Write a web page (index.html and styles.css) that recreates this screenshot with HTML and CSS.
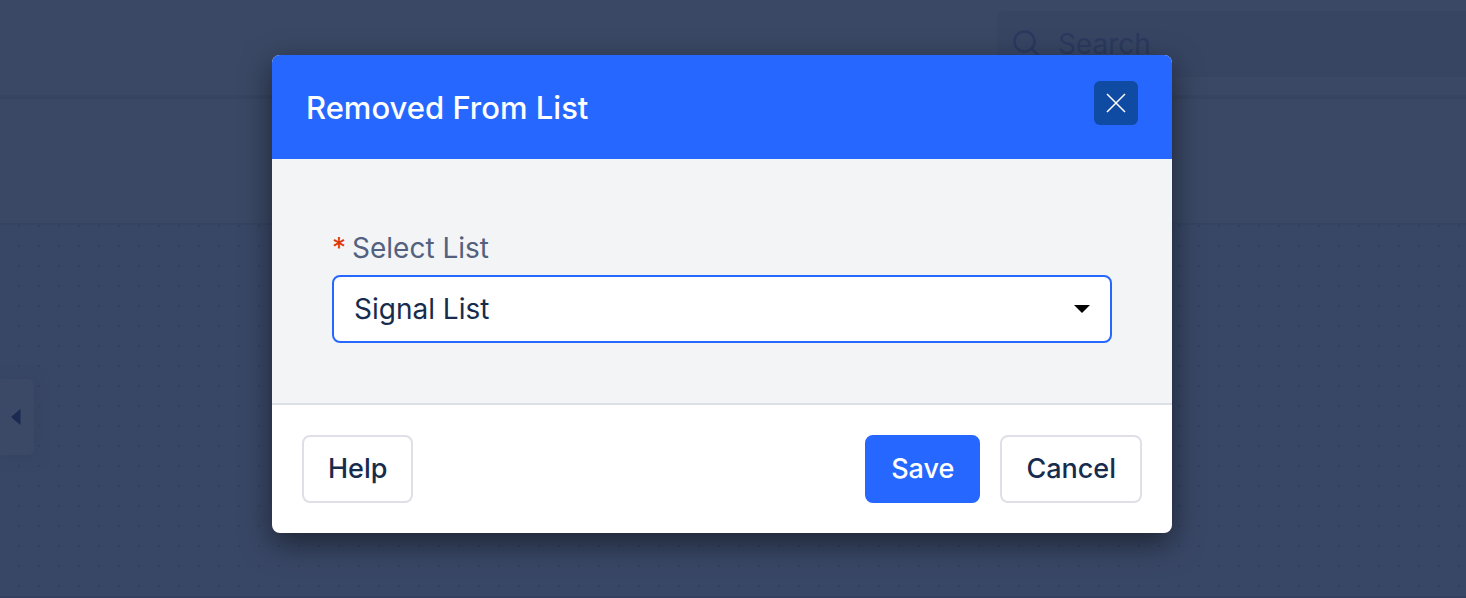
FILE: index.html
```html
<!DOCTYPE html>
<html lang="en">
<head>
<meta charset="utf-8">
<meta name="viewport" content="width=device-width, initial-scale=1">
<title>Removed From List</title>
<link rel="stylesheet" href="styles.css">
</head>
<body>
<div class="page">
  <header class="topbar">
    <label class="search">
      <svg class="search-icon" viewBox="0 0 28 28" aria-hidden="true"><circle cx="11.500" cy="11.500" r="10"/><path d="M18.500 18.500 26.500 26.500"/></svg>
      <input class="search-input" type="search" placeholder="Search" aria-label="Search">
    </label>
  </header>
  <div class="toolbar"></div>
  <main class="canvas">
    <button class="drawer-toggle" type="button" aria-label="Open panel">
      <svg class="drawer-arrow" viewBox="0 0 10 16" aria-hidden="true"><path d="M9.500 0v16L.5 8.500v-1z"/></svg>
    </button>
  </main>
</div>
<div class="overlay">
  <form class="modal" role="dialog" aria-labelledby="modal-title">
    <div class="modal-header">
      <h1 class="modal-title" id="modal-title">Removed From List</h1>
      <button class="close" type="button" aria-label="Close">
        <svg class="close-icon" viewBox="0 0 20 20" aria-hidden="true"><path d="M1 1 19 19M19 1 1 19"/></svg>
      </button>
    </div>
    <div class="modal-body">
      <label class="field-label" for="list"><span class="required">*</span>Select List</label>
      <div class="select-wrap">
        <select class="select" id="list"><option>Signal List</option></select>
        <svg class="caret" viewBox="0 0 16 8" aria-hidden="true"><path d="M0 0h16L8 8z"/></svg>
      </div>
    </div>
    <div class="modal-footer">
      <button class="button" type="button">Help</button>
      <div class="actions">
        <button class="button button-primary" type="submit">Save</button>
        <button class="button" type="button">Cancel</button>
      </div>
    </div>
  </form>
</div>
</body>
</html>
```
FILE: styles.css
```css
* { box-sizing: border-box; }

body {
  margin: 0;
  font-family: Inter, "Liberation Sans", sans-serif;
  font-size: 28px;
  line-height: 34px;
  color: #172b4d;
  background: #3a4865;
  overflow: hidden;
}

button, input, select { font: inherit; }

.page {
  display: flex;
  flex-direction: column;
  min-height: 100vh;
}

.topbar {
  display: flex;
  justify-content: flex-end;
  padding: 11px 0 18px;
  border-bottom: 4px solid #374461;
}

.search {
  display: flex;
  align-items: center;
  gap: 17px;
  width: 32%;
  height: 66px;
  padding: 0 16px;
  border-radius: 8px 0 0 8px;
  background: #374563;
}

.search-icon {
  width: 28px;
  height: 28px;
  fill: none;
  stroke: #2a3a5e;
  stroke-width: 2.5;
}

.search-input {
  flex: 1;
  min-width: 0;
  padding: 0;
  border: 0;
  background: none;
}

.search-input::placeholder { color: #2a3a5e; opacity: 1; }

.toolbar {
  height: 126px;
  border-bottom: 2px solid #364360;
}

.canvas {
  flex: 1;
  display: flex;
  align-items: flex-start;
  padding-top: 154px;
  border-bottom: 2px solid #344160;
  background: radial-gradient(circle, #32405f 1px, transparent 1px) 9px -9px / 20px 20px #394766;
}

.drawer-toggle {
  display: flex;
  align-items: center;
  width: 34px;
  height: 76px;
  padding: 0 11px;
  border: 0;
  border-radius: 0 6px 6px 0;
  background: #3b4967;
  box-shadow: 2px 2px 14px #354361;
}

.drawer-arrow { flex: none; width: 10px; height: 16px; fill: #1b2a50; }

.overlay {
  position: absolute;
  inset: 0;
  display: flex;
  justify-content: center;
  align-items: flex-start;
  padding: 55px 22px 0 0;
}

.modal {
  width: 100%;
  max-width: 900px;
  border-radius: 8px;
  overflow: hidden;
  background: #fff;
  box-shadow: 0 10px 30px rgba(0, 0, 0, 0.5);
}

.modal-header {
  display: flex;
  justify-content: space-between;
  align-items: flex-start;
  padding: 26px 34px 34px;
  background: #2668ff;
  color: #fff;
}

.modal-title {
  margin: 0;
  padding-top: 5px;
  font-size: 31px;
  line-height: 44px;
  font-weight: 500;
  height: 44px;
}

.close {
  display: grid;
  place-items: center;
  width: 44px;
  height: 44px;
  padding: 0;
  border: 0;
  border-radius: 6px;
  background: #0f4aa3;
}

.close-icon {
  width: 20px;
  height: 20px;
  fill: none;
  stroke: #fff;
  stroke-width: 1.5;
}

.modal-body {
  padding: 72px 60px 60px;
  background: #f3f4f6;
  border-bottom: 2px solid #dddfe6;
}

.field-label {
  display: block;
  margin-bottom: 10px;
  color: #53617e;
}

.required { margin-right: 6px; color: #de350b; }

.select-wrap { position: relative; }

.select {
  display: block;
  width: 100%;
  height: 68px;
  padding: 0 60px 0 20px;
  border: 2px solid #2668ff;
  border-radius: 8px;
  background: #fff;
  color: #172b4d;
  appearance: none;
  outline: none;
}

.caret {
  position: absolute;
  top: 30px;
  right: 22px;
  width: 16px;
  height: 8px;
  pointer-events: none;
}

.modal-footer {
  display: flex;
  justify-content: space-between;
  padding: 30px;
}

.actions { display: flex; gap: 20px; }

.button {
  height: 68px;
  padding: 0 24px;
  border: 2px solid #dfe0e7;
  border-radius: 8px;
  background: #fff;
  color: #172b4d;
  font-size: 27px;
  font-weight: 500;
}

.button-primary {
  border-color: #2668ff;
  background: #2668ff;
  color: #fff;
}
```
